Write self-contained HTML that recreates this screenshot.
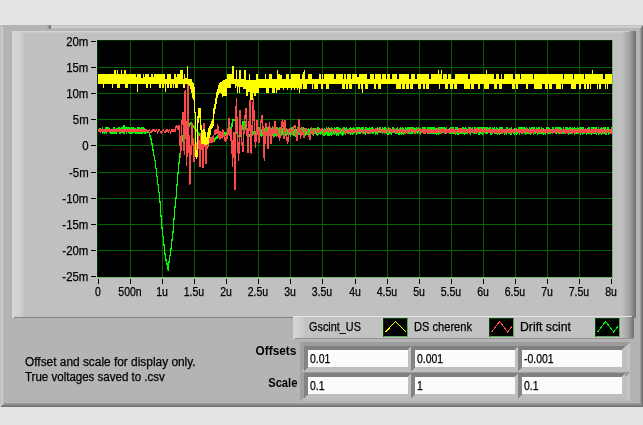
<!DOCTYPE html><html><head><meta charset="utf-8"><title>graph</title><style>
html,body{margin:0;padding:0}
body{width:643px;height:425px;overflow:hidden;background:#e4e4e4;position:relative;font-family:"Liberation Sans",sans-serif;font-size:12px;color:#000}
.a{position:absolute}
.t{position:absolute;white-space:nowrap;line-height:14px;height:14px;filter:grayscale(1);-webkit-text-stroke:0.25px #000}
#panel{left:0;top:25px;width:643px;height:382px;background:#b4b4b4}
#frame{left:12px;top:31px;width:624px;height:287px;background:#c0c0c0}
#legend{left:293px;top:316px;width:341px;height:23px;background:#c2c2c2}
.ico{position:absolute;top:318px;width:23px;height:17px;background:#000;border-style:solid;border-width:1px;border-color:#004800 #5aa85a #5aa85a #004800}
.cell{position:absolute;height:30px;background:#909090}
.wh{position:absolute;width:100px;height:17px;background:#fbfbfb}
</style></head><body>
<div id="panel" class="a"></div>
<svg class="a" style="left:0;top:25px" width="643" height="382" shape-rendering="crispEdges">
<defs>
<linearGradient id="gL" x1="0" x2="1" y1="0" y2="0"><stop offset="0" stop-color="#c0c0c0"/><stop offset="0.25" stop-color="#c0c0c0"/><stop offset="0.25" stop-color="#c9c9c9"/><stop offset="0.75" stop-color="#c9c9c9"/><stop offset="0.75" stop-color="#bbbbbb"/><stop offset="1" stop-color="#bbbbbb"/></linearGradient>
<linearGradient id="gT" x1="0" x2="0" y1="0" y2="1"><stop offset="0" stop-color="#c2c2c2"/><stop offset="0.25" stop-color="#c2c2c2"/><stop offset="0.25" stop-color="#cdcdcd"/><stop offset="0.5" stop-color="#cdcdcd"/><stop offset="0.5" stop-color="#cacaca"/><stop offset="0.75" stop-color="#cacaca"/><stop offset="0.75" stop-color="#b9b9b9"/><stop offset="1" stop-color="#b9b9b9"/></linearGradient>
<linearGradient id="gR" gradientUnits="userSpaceOnUse" x1="640" x2="643" y1="0" y2="0"><stop offset="0" stop-color="#a4a4a4"/><stop offset="1" stop-color="#666"/></linearGradient>
<linearGradient id="gB" x1="0" x2="0" y1="0" y2="1"><stop offset="0" stop-color="#a2a2a2"/><stop offset="1" stop-color="#6a6a6a"/></linearGradient>
<linearGradient id="gM" x1="0" x2="1" y1="0" y2="0"><stop offset="0" stop-color="#b0b0b0"/><stop offset="1" stop-color="#6c6c6c"/></linearGradient>
</defs>
<polygon points="51,0 643,0 640,4 51,4" fill="url(#gT)"/>
<rect x="47" y="0" width="4" height="4" fill="url(#gM)"/>
<polygon points="0,0 4,4 4,378 0,382" fill="url(#gL)"/>
<polygon points="643,0 643,382 640,378 640,4" fill="url(#gR)"/>
<polygon points="0,382 4,378 640,378 643,382" fill="url(#gB)"/>
</svg>
<div id="frame" class="a"></div>
<div class="a" style="left:12px;top:31px;width:13px;height:287px;background:linear-gradient(90deg,#d8d8d8,#d0d0d0 60%,#c0c0c0)"></div>
<div class="a" style="left:622px;top:31px;width:14px;height:287px;background:linear-gradient(90deg,#c0c0c0,#a2a2a2 55%,#6e6e6e)"></div>
<div class="a" style="left:12px;top:31px;width:618px;height:1px;background:linear-gradient(90deg,#d5d5d5 0,#d5d5d5 98%,#c4c4c4)"></div>
<div class="a" style="left:24px;top:32px;width:600px;height:1px;background:#c7c7c7"></div>
<div class="a" style="left:635px;top:33px;width:1px;height:285px;background:#747474"></div>
<div class="a" style="left:14px;top:317px;width:622px;height:1px;background:#848484"></div>

<svg class="a" style="left:0;top:0" width="643" height="320" shape-rendering="crispEdges"><rect x="97" y="40" width="516" height="238" fill="#000"/><path d="M130 41h1v236h-1zM162 41h1v236h-1zM194 41h1v236h-1zM226 41h1v236h-1zM258 41h1v236h-1zM290 41h1v236h-1zM322 41h1v236h-1zM355 41h1v236h-1zM387 41h1v236h-1zM419 41h1v236h-1zM451 41h1v236h-1zM483 41h1v236h-1zM515 41h1v236h-1zM547 41h1v236h-1zM579 41h1v236h-1zM98 67h514v1h-514zM98 93h514v1h-514zM98 119h514v1h-514zM98 145h514v1h-514zM98 172h514v1h-514zM98 198h514v1h-514zM98 224h514v1h-514zM98 250h514v1h-514z" fill="#006400"/><path d="M99 128h1v4h-1zM100 128h1v5h-1zM101 129h1v3h-1zM102 127h1v7h-1zM103 129h1v4h-1zM104 129h1v5h-1zM105 127h1v6h-1zM106 127h1v7h-1zM107 127h2v5h-2zM109 128h1v5h-1zM110 129h3v5h-3zM113 127h2v7h-2zM115 129h1v5h-1zM116 128h1v6h-1zM117 128h1v4h-1zM118 127h1v5h-1zM119 127h1v7h-1zM120 128h1v6h-1zM121 127h2v6h-2zM123 125h2v9h-2zM125 127h1v5h-1zM126 127h1v7h-1zM127 127h1v5h-1zM128 127h1v6h-1zM129 127h1v7h-1zM130 128h1v6h-1zM131 127h2v7h-2zM133 127h1v6h-1zM134 128h1v5h-1zM135 128h1v6h-1zM136 129h1v5h-1zM137 127h3v7h-3zM140 128h1v6h-1zM141 127h2v7h-2zM143 127h1v6h-1zM144 128h1v6h-1zM145 129h1v5h-1zM146 131h3v2h-3zM149 132h1v5h-1zM150 135h1v5h-1zM151 138h1v7h-1zM152 143h1v8h-1zM153 149h1v7h-1zM154 155h1v6h-1zM155 160h1v9h-1zM156 168h1v9h-1zM157 176h1v9h-1zM158 184h1v9h-1zM159 192h1v11h-1zM160 201h1v16h-1zM161 215h1v14h-1zM162 227h1v10h-1zM163 236h1v10h-1zM164 244h1v11h-1zM165 253h1v8h-1zM166 259h1v6h-1zM167 263h1v7h-1zM168 261h1v10h-1zM169 255h1v8h-1zM170 248h1v8h-1zM171 239h1v11h-1zM172 231h1v10h-1zM173 218h1v15h-1zM174 206h1v14h-1zM175 197h1v11h-1zM176 184h1v15h-1zM177 172h1v14h-1zM178 162h1v12h-1zM179 153h1v11h-1zM180 145h1v10h-1zM181 140h1v7h-1zM182 135h1v7h-1zM183 133h1v4h-1zM184 130h1v4h-1zM185 129h1v3h-1zM186 127h1v4h-1zM187 126h1v3h-1zM188 125h1v3h-1zM189 123h1v4h-1zM190 122h2v3h-2zM192 123h1v4h-1zM193 125h1v3h-1zM194 126h1v3h-1zM195 128h1v3h-1zM196 129h1v3h-1zM197 131h1v3h-1zM198 132h1v3h-1zM199 133h1v3h-1zM200 134h1v3h-1zM201 135h1v3h-1zM202 136h1v3h-1zM203 137h1v2h-1zM204 137h1v3h-1zM205 138h1v2h-1zM206 138h1v3h-1zM207 139h1v2h-1zM208 139h2v3h-2zM210 139h2v4h-2zM212 139h1v2h-1zM213 138h2v4h-2zM215 137h1v3h-1zM216 136h1v3h-1zM217 135h1v4h-1zM218 134h1v4h-1zM219 133h1v3h-1zM220 132h1v4h-1zM221 132h1v3h-1zM222 132h1v4h-1zM223 132h2v2h-2zM225 132h1v4h-1zM226 132h1v3h-1zM227 132h1v4h-1zM228 132h1v3h-1zM229 131h1v3h-1zM230 127h1v6h-1zM231 123h1v7h-1zM232 119h1v8h-1zM233 119h2v2h-2zM235 119h1v7h-1zM236 124h1v10h-1zM237 131h1v7h-1zM238 135h1v2h-1zM239 134h1v4h-1zM240 133h1v4h-1zM241 127h1v10h-1zM242 121h1v9h-1zM243 121h1v4h-1zM244 121h1v3h-1zM245 121h1v9h-1zM246 126h1v7h-1zM247 131h1v6h-1zM248 134h3v3h-3zM251 133h1v4h-1zM252 132h1v4h-1zM253 131h3v4h-3zM256 127h1v10h-1zM257 127h2v8h-2zM259 128h1v8h-1zM260 129h1v7h-1zM261 129h1v8h-1zM262 128h1v8h-1zM263 127h1v9h-1zM264 128h1v9h-1zM265 127h1v9h-1zM266 128h1v8h-1zM267 127h1v8h-1zM268 128h1v9h-1zM269 129h1v7h-1zM270 127h1v8h-1zM271 128h2v8h-2zM273 127h1v9h-1zM274 128h1v9h-1zM275 128h1v8h-1zM276 127h1v8h-1zM277 129h1v7h-1zM278 128h1v7h-1zM279 127h1v8h-1zM280 129h1v6h-1zM281 128h1v8h-1zM282 128h1v7h-1zM283 127h1v10h-1zM284 128h1v7h-1zM285 128h1v8h-1zM286 128h1v7h-1zM287 129h3v6h-3zM290 129h1v8h-1zM291 127h2v8h-2zM293 127h1v9h-1zM294 129h1v7h-1zM295 129h2v8h-2zM297 127h1v8h-1zM298 128h1v7h-1zM299 129h1v6h-1zM300 128h1v8h-1zM301 127h1v8h-1zM302 129h1v6h-1zM303 127h1v8h-1zM304 128h1v6h-1zM305 128h1v8h-1zM306 128h1v7h-1zM307 129h1v6h-1zM308 128h1v7h-1zM309 129h1v7h-1zM310 128h1v6h-1zM311 129h1v5h-1zM312 128h1v7h-1zM313 128h1v8h-1zM314 128h2v6h-2zM316 129h1v6h-1zM317 127h1v9h-1zM318 127h1v8h-1zM319 128h1v6h-1zM320 129h1v6h-1zM321 128h1v6h-1zM322 129h1v6h-1zM323 129h1v7h-1zM324 128h1v8h-1zM325 129h1v6h-1zM326 127h1v7h-1zM327 128h1v8h-1zM328 127h1v9h-1zM329 128h1v8h-1zM330 128h1v7h-1zM331 127h1v9h-1zM332 128h1v7h-1zM333 129h1v5h-1zM334 127h1v8h-1zM335 128h1v6h-1zM336 127h1v9h-1zM337 127h1v8h-1zM338 127h1v9h-1zM339 128h2v6h-2zM341 129h1v6h-1zM342 128h1v8h-1zM343 127h1v8h-1zM344 127h1v7h-1zM345 128h1v7h-1zM346 127h1v6h-1zM347 129h1v4h-1zM348 129h1v5h-1zM349 128h1v6h-1zM350 127h1v8h-1zM351 128h1v6h-1zM352 128h1v7h-1zM353 127h1v7h-1zM354 128h1v5h-1zM355 129h1v4h-1zM356 127h1v8h-1zM357 127h3v7h-3zM360 128h1v6h-1zM361 127h1v6h-1zM362 127h2v7h-2zM364 129h1v5h-1zM365 127h1v8h-1zM366 127h1v6h-1zM367 128h2v6h-2zM369 127h1v7h-1zM370 128h1v6h-1zM371 127h1v6h-1zM372 127h1v7h-1zM373 128h1v6h-1zM374 129h1v4h-1zM375 128h1v7h-1zM376 129h1v5h-1zM377 127h1v8h-1zM378 129h1v4h-1zM379 127h2v6h-2zM381 129h1v4h-1zM382 127h1v7h-1zM383 128h1v5h-1zM384 127h1v7h-1zM385 127h1v6h-1zM386 129h1v5h-1zM387 129h1v6h-1zM388 127h1v8h-1zM389 129h2v5h-2zM391 129h1v6h-1zM392 127h2v6h-2zM394 128h1v5h-1zM395 129h1v5h-1zM396 128h1v6h-1zM397 127h1v7h-1zM398 129h1v6h-1zM399 128h1v7h-1zM400 127h1v7h-1zM401 128h1v7h-1zM402 127h1v7h-1zM403 128h1v7h-1zM404 129h1v5h-1zM405 127h1v7h-1zM406 128h1v5h-1zM407 127h6v7h-6zM413 127h1v6h-1zM414 128h1v6h-1zM415 128h1v5h-1zM416 127h1v6h-1zM417 129h1v5h-1zM418 127h1v6h-1zM419 128h1v6h-1zM420 128h1v7h-1zM421 129h1v4h-1zM422 127h4v6h-4zM426 129h1v4h-1zM427 127h2v7h-2zM429 127h1v6h-1zM430 127h5v7h-5zM435 128h1v6h-1zM436 128h1v7h-1zM437 129h1v5h-1zM438 127h1v8h-1zM439 127h1v7h-1zM440 127h1v6h-1zM441 127h1v7h-1zM442 127h2v6h-2zM444 127h1v7h-1zM445 128h1v6h-1zM446 127h1v7h-1zM447 129h2v4h-2zM449 128h1v6h-1zM450 127h4v7h-4zM454 129h1v5h-1zM455 127h1v8h-1zM456 127h1v7h-1zM457 127h1v8h-1zM458 128h1v7h-1zM459 129h1v5h-1zM460 128h1v6h-1zM461 129h1v5h-1zM462 127h2v7h-2zM464 128h1v7h-1zM465 127h1v7h-1zM466 128h1v6h-1zM467 129h1v5h-1zM468 127h1v6h-1zM469 127h1v7h-1zM470 127h1v8h-1zM471 129h1v4h-1zM472 127h1v6h-1zM473 129h1v5h-1zM474 127h2v7h-2zM476 128h1v6h-1zM477 127h1v6h-1zM478 127h2v8h-2zM480 127h2v7h-2zM482 127h1v8h-1zM483 127h1v7h-1zM484 127h1v6h-1zM485 127h3v7h-3zM488 128h1v5h-1zM489 127h1v6h-1zM490 127h1v8h-1zM491 129h1v6h-1zM492 127h1v7h-1zM493 128h1v5h-1zM494 127h1v7h-1zM495 129h1v5h-1zM496 127h1v7h-1zM497 128h1v7h-1zM498 129h1v5h-1zM499 127h1v8h-1zM500 127h3v7h-3zM503 129h1v4h-1zM504 129h1v6h-1zM505 129h1v4h-1zM506 127h1v8h-1zM507 127h1v6h-1zM508 129h1v5h-1zM509 128h1v6h-1zM510 128h1v7h-1zM511 127h1v8h-1zM512 129h1v4h-1zM513 129h1v5h-1zM514 128h1v7h-1zM515 128h1v6h-1zM516 129h1v6h-1zM517 129h1v5h-1zM518 127h1v6h-1zM519 127h1v8h-1zM520 127h1v6h-1zM521 127h2v7h-2zM523 127h1v6h-1zM524 127h1v7h-1zM525 128h1v7h-1zM526 127h1v7h-1zM527 128h1v6h-1zM528 129h1v5h-1zM529 127h1v7h-1zM530 128h1v7h-1zM531 127h1v7h-1zM532 127h1v6h-1zM533 127h1v8h-1zM534 127h1v7h-1zM535 129h1v5h-1zM536 127h1v6h-1zM537 128h1v7h-1zM538 127h2v7h-2zM540 129h1v5h-1zM541 127h1v7h-1zM542 128h1v6h-1zM543 128h1v7h-1zM544 129h1v5h-1zM545 129h1v6h-1zM546 127h1v6h-1zM547 127h2v7h-2zM549 128h1v6h-1zM550 129h1v5h-1zM551 129h1v4h-1zM552 127h1v7h-1zM553 127h1v6h-1zM554 129h1v4h-1zM555 127h2v7h-2zM557 127h1v6h-1zM558 127h3v7h-3zM561 128h1v6h-1zM562 129h1v5h-1zM563 127h1v7h-1zM564 129h1v5h-1zM565 127h1v7h-1zM566 127h1v6h-1zM567 127h1v7h-1zM568 128h1v7h-1zM569 127h2v7h-2zM571 128h1v6h-1zM572 127h1v7h-1zM573 128h1v5h-1zM574 127h1v8h-1zM575 128h2v6h-2zM577 127h1v7h-1zM578 129h1v5h-1zM579 127h1v6h-1zM580 127h1v8h-1zM581 127h1v6h-1zM582 127h1v8h-1zM583 127h1v7h-1zM584 129h1v5h-1zM585 128h1v5h-1zM586 129h1v6h-1zM587 128h1v6h-1zM588 127h2v7h-2zM590 129h1v5h-1zM591 127h1v8h-1zM592 127h4v7h-4zM596 127h1v8h-1zM597 129h1v4h-1zM598 127h1v8h-1zM599 129h1v5h-1zM600 128h1v6h-1zM601 127h1v8h-1zM602 129h1v5h-1zM603 127h2v7h-2zM605 127h1v8h-1zM606 129h1v6h-1zM607 127h1v6h-1zM608 127h1v8h-1zM609 129h1v5h-1zM610 129h1v4h-1zM611 127h1v7h-1z" fill="#00ff00"/><path d="M98 129h49v3h-49zM147 130h1v2h-1zM148 130h1v3h-1zM149 129h1v2h-1zM150 131h1v2h-1zM151 130h1v3h-1zM152 129h1v3h-1zM153 129h1v2h-1zM154 129h1v3h-1zM155 130h1v2h-1zM156 129h1v2h-1zM157 131h1v3h-1zM158 129h1v3h-1zM159 129h1v2h-1zM160 131h1v2h-1zM161 131h1v3h-1zM162 130h1v2h-1zM163 129h1v2h-1zM164 131h1v2h-1zM165 130h1v3h-1zM166 129h2v3h-2zM168 130h1v3h-1zM169 129h1v2h-1zM170 131h1v3h-1zM171 129h4v3h-4zM175 126h1v6h-1zM176 125h1v3h-1zM177 126h1v4h-1zM178 125h1v5h-1zM179 125h1v21h-1zM180 136h1v22h-1zM181 120h1v31h-1zM182 112h1v13h-1zM183 112h1v39h-1zM184 91h1v64h-1zM185 90h1v49h-1zM186 121h1v45h-1zM187 84h1v73h-1zM188 85h1v68h-1zM189 135h1v50h-1zM190 145h1v39h-1zM191 123h1v32h-1zM192 123h1v23h-1zM193 138h1v24h-1zM194 144h1v18h-1zM195 140h1v10h-1zM196 142h1v9h-1zM197 137h1v14h-1zM198 134h1v15h-1zM199 140h1v27h-1zM200 133h1v34h-1zM201 130h1v20h-1zM202 141h1v27h-1zM203 123h1v45h-1zM204 123h1v24h-1zM205 139h1v25h-1zM206 141h1v23h-1zM207 136h1v13h-1zM208 139h1v8h-1zM209 138h1v5h-1zM210 137h2v6h-2zM212 136h1v7h-1zM213 135h1v7h-1zM214 130h1v5h-1zM215 129h1v6h-1zM216 129h1v5h-1zM217 124h1v10h-1zM218 126h1v12h-1zM219 131h1v9h-1zM220 131h1v8h-1zM221 132h1v6h-1zM222 129h1v10h-1zM223 130h1v7h-1zM224 134h1v7h-1zM225 137h1v5h-1zM226 134h1v7h-1zM227 128h1v11h-1zM228 118h1v17h-1zM229 118h1v18h-1zM230 130h1v11h-1zM231 128h1v26h-1zM232 140h1v27h-1zM233 132h1v26h-1zM234 132h1v58h-1zM235 106h1v84h-1zM236 98h1v34h-1zM237 117h1v36h-1zM238 142h1v19h-1zM239 110h1v44h-1zM240 110h1v25h-1zM241 125h1v20h-1zM242 142h1v10h-1zM243 125h1v27h-1zM244 115h1v19h-1zM245 108h1v11h-1zM246 108h1v28h-1zM247 128h1v25h-1zM248 121h1v32h-1zM249 100h1v31h-1zM250 100h1v53h-1zM251 125h1v29h-1zM252 102h1v34h-1zM253 98h1v23h-1zM254 110h1v32h-1zM255 134h1v14h-1zM256 120h1v22h-1zM257 120h1v15h-1zM258 130h1v13h-1zM259 127h1v16h-1zM260 120h1v13h-1zM261 115h1v8h-1zM262 115h1v20h-1zM263 126h1v32h-1zM264 132h1v29h-1zM265 123h1v21h-1zM266 123h1v13h-1zM267 132h1v17h-1zM268 126h1v23h-1zM269 122h1v13h-1zM270 127h1v17h-1zM271 129h1v15h-1zM272 126h1v8h-1zM273 129h1v9h-1zM274 121h1v13h-1zM275 121h1v12h-1zM276 129h1v8h-1zM277 127h1v7h-1zM278 129h1v9h-1zM279 134h1v7h-1zM280 127h1v11h-1zM281 121h1v9h-1zM282 119h1v8h-1zM283 122h1v17h-1zM284 120h1v19h-1zM285 120h1v12h-1zM286 128h1v13h-1zM287 137h1v7h-1zM288 129h1v13h-1zM289 128h2v4h-2zM291 130h1v5h-1zM292 129h1v6h-1zM293 126h1v5h-1zM294 125h1v3h-1zM295 125h1v11h-1zM296 132h1v9h-1zM297 128h1v13h-1zM298 119h1v13h-1zM299 119h1v15h-1zM300 129h1v10h-1zM301 127h1v9h-1zM302 127h1v8h-1zM303 132h1v6h-1zM304 129h1v9h-1zM305 128h2v3h-2zM307 130h1v4h-1zM308 132h1v5h-1zM309 135h1v5h-1zM310 129h1v11h-1zM311 127h1v6h-1zM312 128h1v6h-1zM313 132h1v3h-1zM314 130h1v4h-1zM315 128h1v3h-1zM316 128h1v4h-1zM317 131h1v4h-1zM318 129h1v4h-1zM319 130h1v3h-1zM320 129h1v3h-1zM321 128h2v3h-2zM323 131h1v4h-1zM324 129h1v4h-1zM325 130h1v2h-1zM326 128h1v4h-1zM327 128h1v3h-1zM328 128h1v4h-1zM329 131h1v2h-1zM330 128h1v3h-1zM331 129h1v3h-1zM332 130h1v4h-1zM333 129h1v2h-1zM334 129h1v4h-1zM335 129h1v2h-1zM336 129h2v4h-2zM338 130h1v2h-1zM339 130h1v3h-1zM340 129h1v2h-1zM341 131h1v2h-1zM342 129h1v3h-1zM343 128h1v3h-1zM344 130h1v4h-1zM345 131h1v2h-1zM346 129h1v3h-1zM347 130h1v4h-1zM348 129h1v3h-1zM349 130h1v4h-1zM350 129h1v4h-1zM351 130h2v3h-2zM353 129h2v3h-2zM355 129h1v4h-1zM356 129h1v3h-1zM357 130h1v4h-1zM358 129h3v3h-3zM361 130h1v3h-1zM362 130h1v4h-1zM363 129h1v3h-1zM364 130h1v4h-1zM365 128h1v3h-1zM366 130h3v3h-3zM369 130h1v4h-1zM370 130h1v3h-1zM371 129h3v3h-3zM374 129h1v4h-1zM375 128h1v3h-1zM376 128h1v4h-1zM377 129h1v4h-1zM378 128h1v3h-1zM379 130h1v3h-1zM380 128h1v3h-1zM381 130h1v3h-1zM382 129h1v4h-1zM383 129h1v3h-1zM384 130h2v3h-2zM386 128h1v3h-1zM387 130h2v3h-2zM389 128h1v3h-1zM390 128h1v4h-1zM391 129h1v4h-1zM392 129h1v3h-1zM393 129h1v4h-1zM394 128h1v3h-1zM395 130h1v3h-1zM396 129h1v4h-1zM397 130h2v3h-2zM399 128h1v4h-1zM400 129h1v4h-1zM401 129h2v3h-2zM403 130h1v4h-1zM404 130h1v3h-1zM405 129h1v4h-1zM406 129h1v3h-1zM407 130h1v4h-1zM408 129h1v3h-1zM409 130h1v3h-1zM410 129h1v4h-1zM411 128h1v3h-1zM412 129h2v3h-2zM414 130h1v3h-1zM415 130h1v4h-1zM416 129h1v3h-1zM417 128h2v3h-2zM419 130h1v3h-1zM420 129h1v4h-1zM421 129h1v3h-1zM422 128h1v5h-1zM423 129h3v5h-3zM426 129h1v4h-1zM427 130h1v3h-1zM428 129h1v4h-1zM429 129h1v5h-1zM430 129h1v4h-1zM431 130h1v3h-1zM432 129h1v4h-1zM433 130h2v3h-2zM435 129h2v4h-2zM437 128h1v5h-1zM438 130h1v3h-1zM439 128h1v4h-1zM440 129h1v5h-1zM441 129h1v4h-1zM442 128h1v4h-1zM443 129h1v4h-1zM444 129h1v5h-1zM445 130h1v3h-1zM446 128h1v6h-1zM447 129h4v4h-4zM451 128h2v5h-2zM453 129h1v3h-1zM454 129h1v4h-1zM455 129h1v5h-1zM456 129h1v4h-1zM457 130h1v2h-1zM458 128h3v5h-3zM461 128h1v4h-1zM462 129h1v4h-1zM463 129h1v3h-1zM464 129h2v4h-2zM466 129h1v3h-1zM467 130h1v3h-1zM468 128h1v5h-1zM469 129h1v5h-1zM470 128h1v4h-1zM471 128h1v5h-1zM472 129h1v3h-1zM473 129h3v4h-3zM476 128h2v5h-2zM478 129h1v4h-1zM479 129h1v3h-1zM480 128h1v4h-1zM481 128h1v5h-1zM482 130h1v3h-1zM483 129h1v3h-1zM484 128h2v5h-2zM486 130h1v2h-1zM487 129h1v3h-1zM488 129h4v4h-4zM492 129h1v5h-1zM493 129h2v4h-2zM495 130h1v3h-1zM496 129h1v4h-1zM497 130h1v4h-1zM498 130h1v3h-1zM499 129h2v4h-2zM501 129h1v5h-1zM502 129h2v4h-2zM504 130h1v3h-1zM505 129h1v5h-1zM506 129h1v3h-1zM507 129h3v4h-3zM510 129h1v5h-1zM511 129h1v4h-1zM512 129h1v3h-1zM513 129h1v4h-1zM514 130h1v3h-1zM515 129h1v4h-1zM516 128h1v4h-1zM517 129h1v3h-1zM518 129h6v4h-6zM524 130h1v3h-1zM525 129h1v4h-1zM526 128h1v4h-1zM527 128h1v5h-1zM528 130h1v3h-1zM529 129h1v4h-1zM530 129h1v5h-1zM531 129h2v4h-2zM533 129h1v5h-1zM534 129h1v4h-1zM535 129h1v3h-1zM536 129h3v4h-3zM539 129h1v3h-1zM540 129h1v4h-1zM541 128h1v5h-1zM542 129h1v3h-1zM543 130h1v3h-1zM544 129h3v4h-3zM547 129h1v5h-1zM548 129h1v3h-1zM549 129h1v4h-1zM550 129h1v3h-1zM551 130h1v3h-1zM552 129h3v4h-3zM555 129h1v5h-1zM556 128h1v4h-1zM557 129h1v3h-1zM558 129h2v4h-2zM560 130h1v4h-1zM561 129h1v5h-1zM562 129h2v3h-2zM564 129h1v5h-1zM565 129h2v4h-2zM567 130h1v4h-1zM568 130h1v3h-1zM569 129h3v4h-3zM572 130h1v4h-1zM573 129h2v4h-2zM575 129h1v5h-1zM576 129h1v3h-1zM577 130h1v3h-1zM578 128h1v5h-1zM579 130h1v3h-1zM580 129h5v4h-5zM585 128h1v5h-1zM586 129h6v4h-6zM592 128h1v6h-1zM593 129h1v4h-1zM594 128h1v5h-1zM595 129h2v4h-2zM597 129h1v3h-1zM598 129h2v4h-2zM600 129h1v5h-1zM601 129h1v4h-1zM602 128h1v4h-1zM603 129h1v5h-1zM604 130h1v2h-1zM605 129h1v4h-1zM606 130h1v3h-1zM607 129h1v4h-1zM608 130h1v2h-1zM609 130h1v3h-1zM610 129h1v5h-1zM611 128h1v6h-1z" fill="#fb4a4a"/><path d="M98 74h5v10h-5zM103 74h1v14h-1zM104 74h8v10h-8zM112 74h1v14h-1zM113 74h1v10h-1zM114 70h2v14h-2zM116 74h1v10h-1zM117 70h1v18h-1zM118 74h2v14h-2zM120 74h1v10h-1zM121 70h1v14h-1zM122 74h2v10h-2zM124 70h1v14h-1zM125 70h1v18h-1zM126 74h2v14h-2zM128 74h8v10h-8zM136 77h1v7h-1zM137 74h1v18h-1zM138 74h3v10h-3zM141 78h2v6h-2zM143 74h1v10h-1zM144 77h1v7h-1zM145 74h1v10h-1zM146 74h2v14h-2zM148 74h1v10h-1zM149 77h1v7h-1zM150 77h1v11h-1zM151 74h2v10h-2zM153 77h1v7h-1zM154 74h5v10h-5zM159 74h2v14h-2zM161 74h1v10h-1zM162 74h2v14h-2zM164 74h1v10h-1zM165 79h1v13h-1zM166 79h1v5h-1zM167 74h2v14h-2zM169 74h1v10h-1zM170 74h1v14h-1zM171 79h1v9h-1zM172 79h1v5h-1zM173 79h1v9h-1zM174 74h1v10h-1zM175 74h1v14h-1zM176 77h1v11h-1zM177 74h1v14h-1zM178 74h2v10h-2zM180 70h3v14h-3zM183 79h1v9h-1zM184 74h1v14h-1zM185 78h2v6h-2zM187 66h1v18h-1zM188 79h1v6h-1zM189 79h1v7h-1zM190 79h1v10h-1zM191 79h1v14h-1zM192 82h1v16h-1zM193 83h1v17h-1zM194 87h1v26h-1zM195 112h1v45h-1zM196 150h1v9h-1zM197 116h1v41h-1zM198 108h1v15h-1zM199 108h1v10h-1zM200 108h1v22h-1zM201 125h1v19h-1zM202 130h1v14h-1zM203 129h1v15h-1zM204 129h1v16h-1zM205 132h1v13h-1zM206 137h1v8h-1zM207 132h1v12h-1zM208 128h1v16h-1zM209 126h1v12h-1zM210 124h1v11h-1zM211 121h1v8h-1zM212 119h1v9h-1zM213 108h1v18h-1zM214 104h1v10h-1zM215 98h1v11h-1zM216 92h1v12h-1zM217 89h1v9h-1zM218 85h1v10h-1zM219 83h1v10h-1zM220 82h1v11h-1zM221 82h1v12h-1zM222 81h1v16h-1zM223 80h2v16h-2zM225 79h2v17h-2zM227 74h4v14h-4zM231 74h1v10h-1zM232 66h2v18h-2zM234 79h1v5h-1zM235 79h1v9h-1zM236 70h1v16h-1zM237 79h1v14h-1zM238 79h1v8h-1zM239 70h1v23h-1zM240 70h1v17h-1zM241 79h2v8h-2zM243 79h1v10h-1zM244 70h2v19h-2zM246 80h2v16h-2zM248 80h1v12h-1zM249 74h1v18h-1zM250 80h3v20h-3zM253 80h1v13h-1zM254 80h2v16h-2zM256 74h2v19h-2zM258 79h1v14h-1zM259 79h6v9h-6zM265 74h1v14h-1zM266 79h3v14h-3zM269 74h3v14h-3zM272 79h3v14h-3zM275 79h1v9h-1zM276 79h1v14h-1zM277 70h1v20h-1zM278 74h2v16h-2zM280 75h2v13h-2zM282 79h1v9h-1zM283 79h1v11h-1zM284 79h2v9h-2zM286 74h1v14h-1zM287 74h1v16h-1zM288 74h1v14h-1zM289 79h2v9h-2zM291 74h1v16h-1zM292 74h2v14h-2zM294 74h1v16h-1zM295 74h2v14h-2zM297 74h1v16h-1zM298 74h1v14h-1zM299 74h1v19h-1zM300 79h2v10h-2zM302 74h1v10h-1zM303 72h1v17h-1zM304 70h1v19h-1zM305 79h2v10h-2zM307 79h1v5h-1zM308 74h4v10h-4zM312 79h1v10h-1zM313 79h1v5h-1zM314 79h4v10h-4zM318 79h1v5h-1zM319 74h2v10h-2zM321 79h1v10h-1zM322 74h1v15h-1zM323 79h1v5h-1zM324 74h2v10h-2zM326 74h3v15h-3zM329 74h5v10h-5zM334 79h2v5h-2zM336 74h6v10h-6zM342 74h1v15h-1zM343 79h1v10h-1zM344 74h1v15h-1zM345 74h1v10h-1zM346 79h1v10h-1zM347 74h1v15h-1zM348 74h1v10h-1zM349 74h2v15h-2zM351 79h1v10h-1zM352 74h5v10h-5zM357 77h1v7h-1zM358 77h1v12h-1zM359 74h1v15h-1zM360 74h1v10h-1zM361 74h1v15h-1zM362 74h1v19h-1zM363 74h2v10h-2zM365 74h2v15h-2zM367 79h1v10h-1zM368 79h2v5h-2zM370 74h4v10h-4zM374 79h1v10h-1zM375 74h1v15h-1zM376 74h2v10h-2zM378 74h3v15h-3zM381 79h1v5h-1zM382 74h4v10h-4zM386 79h1v5h-1zM387 74h3v10h-3zM390 79h2v5h-2zM392 74h4v10h-4zM396 74h1v15h-1zM397 79h2v10h-2zM399 74h2v15h-2zM401 74h1v10h-1zM402 74h3v15h-3zM405 74h1v10h-1zM406 74h3v15h-3zM409 79h1v5h-1zM410 79h1v10h-1zM411 74h2v15h-2zM413 74h2v10h-2zM415 79h2v5h-2zM417 74h1v10h-1zM418 74h3v15h-3zM421 74h2v10h-2zM423 74h2v15h-2zM425 74h1v10h-1zM426 74h3v15h-3zM429 79h2v5h-2zM431 74h7v10h-7zM438 70h1v14h-1zM439 74h1v15h-1zM440 74h1v10h-1zM441 70h1v14h-1zM442 79h1v5h-1zM443 74h2v10h-2zM445 74h2v15h-2zM447 79h1v10h-1zM448 74h2v10h-2zM450 74h1v15h-1zM451 79h2v10h-2zM453 79h1v5h-1zM454 79h1v10h-1zM455 74h2v15h-2zM457 74h7v10h-7zM464 74h4v15h-4zM468 79h2v10h-2zM470 74h1v10h-1zM471 74h3v15h-3zM474 74h4v10h-4zM478 74h2v15h-2zM480 74h4v10h-4zM484 74h2v15h-2zM486 70h1v19h-1zM487 74h2v15h-2zM489 74h5v10h-5zM494 79h2v10h-2zM496 74h1v15h-1zM497 74h2v10h-2zM499 79h2v10h-2zM501 74h1v15h-1zM502 79h2v5h-2zM504 74h8v10h-8zM512 74h1v15h-1zM513 79h2v10h-2zM515 74h1v10h-1zM516 74h2v15h-2zM518 74h2v10h-2zM520 79h1v5h-1zM521 74h5v10h-5zM526 74h2v15h-2zM528 74h5v10h-5zM533 79h1v5h-1zM534 74h8v15h-8zM542 74h3v10h-3zM545 74h3v15h-3zM548 74h1v10h-1zM549 74h3v15h-3zM552 74h4v10h-4zM556 74h5v15h-5zM561 74h1v10h-1zM562 74h1v15h-1zM563 79h1v5h-1zM564 74h7v10h-7zM571 74h2v15h-2zM573 79h1v10h-1zM574 74h2v15h-2zM576 74h3v10h-3zM579 74h2v15h-2zM581 74h3v10h-3zM584 79h1v10h-1zM585 74h1v15h-1zM586 74h1v10h-1zM587 74h2v15h-2zM589 74h1v10h-1zM590 74h1v15h-1zM591 74h1v10h-1zM592 70h1v14h-1zM593 74h4v10h-4zM597 74h1v15h-1zM598 74h1v10h-1zM599 74h2v15h-2zM601 74h2v10h-2zM603 79h2v5h-2zM605 74h1v15h-1zM606 74h1v10h-1zM607 74h1v15h-1zM608 74h4v10h-4z" fill="#ffff00"/><path d="M97 40h516v1h-516zM97 40h1v238h-1z" fill="#003000"/><path d="M97 277h516v1h-516zM612 40h1v238h-1z" fill="#70b870"/><path d="M98 279h1v5h-1zM130 279h1v5h-1zM162 279h1v5h-1zM194 279h1v5h-1zM226 279h1v5h-1zM258 279h1v5h-1zM290 279h1v5h-1zM322 279h1v5h-1zM355 279h1v5h-1zM387 279h1v5h-1zM419 279h1v5h-1zM451 279h1v5h-1zM483 279h1v5h-1zM515 279h1v5h-1zM547 279h1v5h-1zM579 279h1v5h-1zM611 279h1v5h-1zM91 41h5v1h-5zM91 67h5v1h-5zM91 93h5v1h-5zM91 119h5v1h-5zM91 145h5v1h-5zM91 172h5v1h-5zM91 198h5v1h-5zM91 224h5v1h-5zM91 250h5v1h-5zM91 276h5v1h-5z" fill="#000"/></svg>
<div class="t" style="right:554.2px;top:34.7px;transform:scaleX(0.95);transform-origin:100% 50%">20m</div>
<div class="t" style="right:554.2px;top:60.7px;transform:scaleX(0.95);transform-origin:100% 50%">15m</div>
<div class="t" style="right:554.2px;top:86.7px;transform:scaleX(0.95);transform-origin:100% 50%">10m</div>
<div class="t" style="right:554.2px;top:112.7px;transform:scaleX(0.95);transform-origin:100% 50%">5m</div>
<div class="t" style="right:554.2px;top:138.7px;transform:scaleX(0.95);transform-origin:100% 50%">0</div>
<div class="t" style="right:554.2px;top:165.7px;transform:scaleX(0.95);transform-origin:100% 50%">-5m</div>
<div class="t" style="right:554.2px;top:191.7px;transform:scaleX(0.95);transform-origin:100% 50%">-10m</div>
<div class="t" style="right:554.2px;top:217.7px;transform:scaleX(0.95);transform-origin:100% 50%">-15m</div>
<div class="t" style="right:554.2px;top:243.7px;transform:scaleX(0.95);transform-origin:100% 50%">-20m</div>
<div class="t" style="right:554.2px;top:269.7px;transform:scaleX(0.95);transform-origin:100% 50%">-25m</div>
<div class="t" style="left:67.9px;width:60px;text-align:center;top:285px;transform:scaleX(0.875)">0</div>
<div class="t" style="left:99.9px;width:60px;text-align:center;top:285px;transform:scaleX(0.875)">500n</div>
<div class="t" style="left:131.9px;width:60px;text-align:center;top:285px;transform:scaleX(0.875)">1u</div>
<div class="t" style="left:163.9px;width:60px;text-align:center;top:285px;transform:scaleX(0.875)">1.5u</div>
<div class="t" style="left:195.9px;width:60px;text-align:center;top:285px;transform:scaleX(0.875)">2u</div>
<div class="t" style="left:227.9px;width:60px;text-align:center;top:285px;transform:scaleX(0.875)">2.5u</div>
<div class="t" style="left:259.9px;width:60px;text-align:center;top:285px;transform:scaleX(0.875)">3u</div>
<div class="t" style="left:291.9px;width:60px;text-align:center;top:285px;transform:scaleX(0.875)">3.5u</div>
<div class="t" style="left:324.9px;width:60px;text-align:center;top:285px;transform:scaleX(0.875)">4u</div>
<div class="t" style="left:356.9px;width:60px;text-align:center;top:285px;transform:scaleX(0.875)">4.5u</div>
<div class="t" style="left:388.9px;width:60px;text-align:center;top:285px;transform:scaleX(0.875)">5u</div>
<div class="t" style="left:420.9px;width:60px;text-align:center;top:285px;transform:scaleX(0.875)">5.5u</div>
<div class="t" style="left:452.9px;width:60px;text-align:center;top:285px;transform:scaleX(0.875)">6u</div>
<div class="t" style="left:484.9px;width:60px;text-align:center;top:285px;transform:scaleX(0.875)">6.5u</div>
<div class="t" style="left:516.9px;width:60px;text-align:center;top:285px;transform:scaleX(0.875)">7u</div>
<div class="t" style="left:548.9px;width:60px;text-align:center;top:285px;transform:scaleX(0.875)">7.5u</div>
<div class="t" style="left:580.9px;width:60px;text-align:center;top:285px;transform:scaleX(0.875)">8u</div>
<div id="legend" class="a"></div>
<div class="a" style="left:293px;top:316px;width:13px;height:23px;background:linear-gradient(90deg,#d6d6d6,#cecece 60%,#c2c2c2)"></div>
<div class="a" style="left:620px;top:316px;width:14px;height:23px;background:linear-gradient(90deg,#c2c2c2,#a4a4a4 55%,#707070)"></div>
<div class="a" style="left:293px;top:316px;width:339px;height:1px;background:#e4e4e4"></div>
<div class="a" style="left:295px;top:338px;width:339px;height:1px;background:#929292"></div>

<div class="ico" style="left:383px"></div><svg class="a" style="left:383px;top:318px" width="25" height="19"><polyline points="2.5,14 12.5,3.5 23,14" fill="none" stroke="#ffff00" stroke-width="1" shape-rendering="crispEdges"/></svg>
<div class="ico" style="left:489px"></div><svg class="a" style="left:489px;top:318px" width="25" height="19"><polyline points="2.5,14 10.7,3.5 18.7,14 23,8.3" fill="none" stroke="#fb4a4a" stroke-width="1" shape-rendering="crispEdges"/></svg>
<div class="ico" style="left:595px"></div><svg class="a" style="left:595px;top:318px" width="25" height="19"><polyline points="2.5,14 10.7,3.5 18.7,14 23,8.3" fill="none" stroke="#00ff00" stroke-width="1" shape-rendering="crispEdges"/></svg>
<div class="t" style="left:308.5px;top:320px;transform:scaleX(0.905);transform-origin:0 50%">Gscint_US</div>
<div class="t" style="left:414.2px;top:320px;transform:scaleX(0.925);transform-origin:0 50%">DS cherenk</div>
<div class="t" style="left:519.5px;top:320px;transform:scaleX(1.02);transform-origin:0 50%">Drift scint</div>
<div class="t" style="left:25px;top:354.5px;transform:scaleX(0.99);transform-origin:0 50%">Offset and scale for display only.</div>
<div class="t" style="left:25px;top:369.5px;transform:scaleX(0.96);transform-origin:0 50%">True voltages saved to .csv</div>
<div class="t" style="right:346.6px;top:344px;font-weight:bold;-webkit-text-stroke:0;transform:scaleX(0.985);transform-origin:100% 50%">Offsets</div>
<div class="t" style="right:345.4px;top:375.6px;font-weight:bold;-webkit-text-stroke:0;transform:scaleX(0.93);transform-origin:100% 50%">Scale</div>
<svg class="a" style="left:300px;top:342px" width="330" height="30" shape-rendering="crispEdges">
<rect x="0" y="0" width="330" height="30" fill="#b8b8b8"/>
<polygon points="0,0 330,0 326,4 4,4" fill="#9c9c9c"/>
<polygon points="0,0 4,4 4,27 0,30" fill="#a0a0a0"/>
<polygon points="330,0 330,30 326,27 326,4" fill="#c4c4c4"/>
<polygon points="0,30 4,27 326,27 330,30" fill="#bcbcbc"/>
</svg>
<svg class="a" style="left:304px;top:346px" width="107" height="25" shape-rendering="crispEdges">
<polygon points="0,0 107,0 104,4 4,4" fill="#808080"/>
<polygon points="0,0 4,4 4,21 0,25" fill="#848484"/>
<polygon points="107,0 107,25 104,21 104,4" fill="#c0c0c0"/>
<polygon points="0,25 4,21 104,21 107,25" fill="#bebebe"/>
<rect x="4" y="4" width="100" height="17" fill="#fbfbfb"/>
</svg>
<div class="t" style="left:309.6px;top:351.8px;transform:scaleX(0.87);transform-origin:0 50%">0.01</div>
<svg class="a" style="left:411px;top:346px" width="107" height="25" shape-rendering="crispEdges">
<polygon points="0,0 107,0 104,4 4,4" fill="#808080"/>
<polygon points="0,0 4,4 4,21 0,25" fill="#848484"/>
<polygon points="107,0 107,25 104,21 104,4" fill="#c0c0c0"/>
<polygon points="0,25 4,21 104,21 107,25" fill="#bebebe"/>
<rect x="4" y="4" width="100" height="17" fill="#fbfbfb"/>
</svg>
<div class="t" style="left:416.6px;top:351.8px;transform:scaleX(0.87);transform-origin:0 50%">0.001</div>
<svg class="a" style="left:518px;top:346px" width="107" height="25" shape-rendering="crispEdges">
<polygon points="0,0 107,0 104,4 4,4" fill="#808080"/>
<polygon points="0,0 4,4 4,21 0,25" fill="#848484"/>
<polygon points="107,0 107,25 104,21 104,4" fill="#c0c0c0"/>
<polygon points="0,25 4,21 104,21 107,25" fill="#bebebe"/>
<rect x="4" y="4" width="100" height="17" fill="#fbfbfb"/>
</svg>
<div class="t" style="left:523.6px;top:351.8px;transform:scaleX(0.87);transform-origin:0 50%">-0.001</div>
<svg class="a" style="left:300px;top:372px" width="330" height="29" shape-rendering="crispEdges">
<rect x="0" y="0" width="330" height="29" fill="#b8b8b8"/>
<polygon points="0,0 330,0 326,4 4,4" fill="#9c9c9c"/>
<polygon points="0,0 4,4 4,26 0,29" fill="#a0a0a0"/>
<polygon points="330,0 330,29 326,26 326,4" fill="#c4c4c4"/>
<polygon points="0,29 4,26 326,26 330,29" fill="#bcbcbc"/>
</svg>
<svg class="a" style="left:304px;top:373px" width="107" height="25" shape-rendering="crispEdges">
<polygon points="0,0 107,0 104,4 4,4" fill="#808080"/>
<polygon points="0,0 4,4 4,21 0,25" fill="#848484"/>
<polygon points="107,0 107,25 104,21 104,4" fill="#c0c0c0"/>
<polygon points="0,25 4,21 104,21 107,25" fill="#bebebe"/>
<rect x="4" y="4" width="100" height="17" fill="#fbfbfb"/>
</svg>
<div class="t" style="left:309.6px;top:378.8px;transform:scaleX(0.87);transform-origin:0 50%">0.1</div>
<svg class="a" style="left:411px;top:373px" width="107" height="25" shape-rendering="crispEdges">
<polygon points="0,0 107,0 104,4 4,4" fill="#808080"/>
<polygon points="0,0 4,4 4,21 0,25" fill="#848484"/>
<polygon points="107,0 107,25 104,21 104,4" fill="#c0c0c0"/>
<polygon points="0,25 4,21 104,21 107,25" fill="#bebebe"/>
<rect x="4" y="4" width="100" height="17" fill="#fbfbfb"/>
</svg>
<div class="t" style="left:416.6px;top:378.8px;transform:scaleX(0.87);transform-origin:0 50%">1</div>
<svg class="a" style="left:518px;top:373px" width="107" height="25" shape-rendering="crispEdges">
<polygon points="0,0 107,0 104,4 4,4" fill="#808080"/>
<polygon points="0,0 4,4 4,21 0,25" fill="#848484"/>
<polygon points="107,0 107,25 104,21 104,4" fill="#c0c0c0"/>
<polygon points="0,25 4,21 104,21 107,25" fill="#bebebe"/>
<rect x="4" y="4" width="100" height="17" fill="#fbfbfb"/>
</svg>
<div class="t" style="left:523.6px;top:378.8px;transform:scaleX(0.87);transform-origin:0 50%">0.1</div>
</body></html>
